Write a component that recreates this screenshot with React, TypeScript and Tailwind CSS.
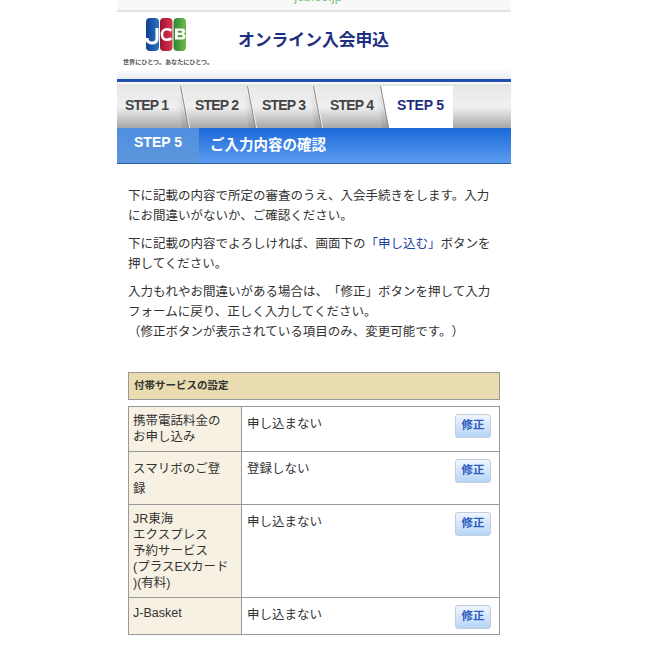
import React from "react";

const font = { fontFamily: '"Liberation Sans","Noto Sans CJK JP",sans-serif' };

function JcbLogo() {
  return (
    <svg width="40" height="33" viewBox="0 0 40 33">
      <defs>
        <linearGradient id="b" x1="0" x2="1"><stop offset="0" stopColor="#0d3f92" /><stop offset="1" stopColor="#2c74c4" /></linearGradient>
        <linearGradient id="r" x1="0" x2="1"><stop offset="0" stopColor="#9c1230" /><stop offset="1" stopColor="#dc3650" /></linearGradient>
        <linearGradient id="g" x1="0" x2="1"><stop offset="0" stopColor="#2a8636" /><stop offset="1" stopColor="#72bd48" /></linearGradient>
      </defs>
      <rect x="0" y="0" width="13" height="33" rx="4" fill="url(#b)" />
      <rect x="14" y="0" width="12.500" height="33" rx="4" fill="url(#r)" />
      <rect x="27.500" y="0" width="12.500" height="33" rx="4" fill="url(#g)" />
      <path d="M1 20c0 3.500 2.200 5 5 5s5-1.500 5-4.500V10" fill="none" stroke="#fff" strokeWidth="3" />
      <path d="M25.500 12.500c-1.500-.8-2.900-1.300-4.500-1.300-3 0-5 1.900-5 5.300s2 5.300 5 5.300c1.600 0 3-.5 4.500-1.300" fill="none" stroke="#fff" strokeWidth="2.600" />
      <path d="M29 10.500h7c3.800 0 4.100 4.300 1.400 5.300 3.200.8 3 5.700-1.100 5.700H29zM31.800 12.700v2.100h3.400c1.400 0 1.400-2.100 0-2.100zM31.800 17v2.300h3.700c1.600 0 1.600-2.300 0-2.300z" fill="#fff" fillRule="evenodd" />
    </svg>
  );
}

function Tab({ label, w, pl, next }: { label: string; w: string; pl: string; next?: boolean }) {
  return (
    <div className={`relative flex items-center pb-[3px] text-[14px] font-bold tracking-[-0.8px] text-[#444] ${w} ${pl}`}>
      <span className="relative">{label}</span>
      <svg className="absolute right-0 top-0" width="22" height="42" viewBox="0 0 22 42">
        <defs>
          <linearGradient id="sh" x1="0" x2="1">
            <stop offset="0" stopColor="#000" stopOpacity="0" />
            <stop offset="1" stopColor="#000" stopOpacity="0.12" />
          </linearGradient>
        </defs>
        <path d="M8 10 L13 10 L21 42 L14 42 Z" fill="url(#sh)" />
        {next ? (
          <path d="M13 0 L22 0 L22 42 L21 42 Z" fill="#fff" />
        ) : (
          <path d="M13.500 0 L21.500 42" stroke="#f4f4f4" strokeWidth="1" fill="none" />
        )}
        <path d="M12.500 0 L20.500 42" stroke="#8b8b8b" strokeWidth="1" fill="none" />
      </svg>
    </div>
  );
}

function Fix() {
  return (
    <div className="mt-[1px] flex h-[24px] w-[36px] shrink-0 items-center justify-center rounded-[3px] border border-[#c4cdd8] bg-gradient-to-b from-[#f0f6fd] to-[#b5d5f7] text-[11.500px] font-bold text-[#2f5cc0]">
      修正
    </div>
  );
}

function Row({ label, value, h, last }: { label: React.ReactNode; value: string; h: string; last?: boolean }) {
  return (
    <div className={`flex ${h} ${last ? "" : "border-b border-[#999]"}`}>
      <div className="w-[113px] shrink-0 border-r border-[#999] bg-[#f7f1e3] pl-[4px] pt-[6px] text-[12.500px] leading-[16px] text-[#333]">{label}</div>
      <div className="flex flex-1 items-start justify-between pl-[5px] pr-[8px] pt-[6px] text-[12.500px] text-[#333]">
        <span className="pt-[2px] leading-[18px]">{value}</span>
        <Fix />
      </div>
    </div>
  );
}

export default function App() {
  return (
    <div className="h-[668px] w-[646px] overflow-hidden bg-white [text-spacing-trim:space-all]" style={font}>
      <div className="mx-[117px] w-[394px]">
        <div className="flex h-[12px] items-start justify-center overflow-hidden border-b-[2px] border-[#e2e2e2] bg-[#f8f8f8] text-[13px] leading-[12px] text-[#78c878]">
          <span className="-mt-[9px]">▪ jcb.co.jp</span>
        </div>
        <div className="flex h-[67px] bg-gradient-to-b from-white from-[85%] to-[#e9ebf2]">
          <div className="flex w-[121px] flex-col pl-[6px] pt-[6px]">
            <div className="pl-[23px]"><JcbLogo /></div>
            <div className="mt-[7px] whitespace-nowrap text-[6.100px] font-bold leading-[8px] text-[#555]">世界にひとつ。あなたにひとつ。</div>
          </div>
          <div className="pt-[17px] text-[16.800px] font-bold leading-[24px] text-[#1c2f80]">オンライン入会申込</div>
        </div>
        <div className="h-[3px] bg-[#1f4fb0]" />
        <div className="h-[4px] bg-gradient-to-b from-white to-[#dcdcdc]" />
        <div className="flex h-[42px] bg-gradient-to-b from-[#e8e8e8] via-[#f0f0f0] to-[#a8a8a8]">
          <Tab label="STEP 1" w="w-[73px]" pl="pl-[8px]" />
          <Tab label="STEP 2" w="w-[67px]" pl="pl-[5px]" />
          <Tab label="STEP 3" w="w-[66px]" pl="pl-[5px]" />
          <Tab label="STEP 4" w="w-[67px]" pl="pl-[7px]" next />
          <div className="flex w-[63px] items-center bg-white pb-[3px] pl-[7px] text-[14px] font-bold tracking-[-0.2px] text-[#1e2f7e]">STEP 5</div>
        </div>
        <div className="flex h-[36px] border-b border-[#2e5d9c] bg-gradient-to-b from-[#1a68d8] to-[#5a9cf0]">
          <div className="flex w-[82px] justify-center bg-gradient-to-b from-[#4f8fe0] to-[#5d96dc] pt-[5px] text-[14px] font-bold leading-[18px] text-white">STEP 5</div>
          <div className="pl-[11px] pt-[7px] text-[14.500px] font-bold leading-[20px] text-white">ご入力内容の確認</div>
        </div>

        <div className="flex flex-col gap-[8px] px-[11px] pt-[22px] text-[12.500px] leading-[20px] text-[#333]">
          <p>下に記載の内容で所定の審査のうえ、入会手続きをします。入力<br />にお間違いがないか、ご確認ください。</p>
          <p>下に記載の内容でよろしければ、画面下の<span className="text-[#1f3f9f]">「申し込む」</span>ボタンを<br />押してください。</p>
          <p>入力もれやお間違いがある場合は、「修正」ボタンを押して入力<br />フォームに戻り、正しく入力してください。<br />（修正ボタンが表示されている項目のみ、変更可能です。）</p>
        </div>

        <div className="mx-[11px] mt-[30px] flex h-[28px] w-[372px] items-center border border-[#999] bg-[#e8dcb0] pb-[1px] pl-[5px] text-[10.500px] font-bold text-[#333]">付帯サービスの設定</div>

        <div className="mx-[11px] mt-[6px] w-[372px] border border-[#999]">
          <Row h="h-[45px]" label={<>携帯電話料金の<br />お申し込み</>} value="申し込まない" />
          <Row h="h-[53px]" label={<div className="pt-[1px] leading-[20px]">スマリボのご登<br />録</div>} value="登録しない" />
          <Row h="h-[93px]" label={<>JR東海<br />エクスプレス<br />予約サービス<br />(プラスEXカード<br />)(有料)</>} value="申し込まない" />
          <Row h="h-[36px]" last label={<div className="pt-[1px]">J-Basket</div>} value="申し込まない" />
        </div>
      </div>
    </div>
  );
}
